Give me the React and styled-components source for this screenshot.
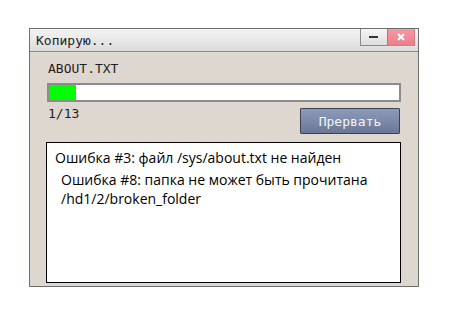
import React from "react";
import styled, { createGlobalStyle } from "styled-components";

const Global = createGlobalStyle`
  html, body { margin: 0; padding: 0; background: #ffffff; }
  body { font-family: "DejaVu Sans Mono", monospace; }
`;

const Page = styled.div`
  padding: 28px 0 0 29px;
`;

const Window = styled.div`
  width: 388px;
  height: 257px;
  border: 1px solid #6e6e6e;
  background: #ded7d0;
  display: flex;
  flex-direction: column;
`;

const TitleBar = styled.div`
  height: 22px;
  background: linear-gradient(#f4f4f4, #dcdcdc);
  border-bottom: 1px solid #8c8c8c;
  display: flex;
  align-items: flex-start;
  justify-content: space-between;
  padding-left: 6px;
`;

const Title = styled.div`
  font-family: "DejaVu Sans Mono", monospace;
  font-size: 13px;
  color: #1e1e1e;
  line-height: 23px;
`;

const Controls = styled.div`
  display: flex;
  margin-right: 3px;
`;

const CtrlButton = styled.div`
  width: 26px;
  height: 16px;
  display: flex;
  align-items: center;
  justify-content: center;
  border: 1px solid ${(p) => (p.$close ? "#d87882" : "#8a8a8a")};
  border-top: none;
  background: ${(p) =>
    p.$close ? "linear-gradient(#f39aa2, #ea7f89)" : "linear-gradient(#f6f6f6, #dedede)"};
  & + & { border-left: none; }
`;

const Content = styled.div`
  flex: 1;
  display: flex;
  flex-direction: column;
  padding: 9px 17px 12px 16px;
`;

const FileName = styled.div`
  font-size: 13px;
  line-height: 15px;
  color: #1e1e1e;
  padding-left: 2px;
`;

const Bar = styled.div`
  margin: 7px 0 0 1px;
  height: 15px;
  border: 2px solid #8b8b8b;
  background: #ffffff;
`;

const Fill = styled.div`
  height: 100%;
  background: #00ff00;
`;

const Row = styled.div`
  display: flex;
  justify-content: space-between;
  align-items: flex-start;
  margin-top: 4px;
  padding-left: 2px;
`;

const Count = styled.div`
  font-size: 13px;
  line-height: 15px;
  color: #1e1e1e;
`;

const AbortButton = styled.div`
  width: 98px;
  height: 24px;
  margin-top: 2px;
  margin-right: 1px;
  border: 1px solid #3c4150;
  border-radius: 1px;
  background: linear-gradient(#8d9bbb, #6a7794);
  color: #f2f4f8;
  font-size: 13px;
  display: flex;
  align-items: center;
  justify-content: center;
`;

const Log = styled.div`
  margin-top: 8px;
  height: 129px;
  border: 1px solid #000000;
  background: #ffffff;
  padding: 5px 8px;
  font-family: "Open Sans", sans-serif;
  font-size: 14px;
  color: #000000;
`;

const LogLine = styled.div`
  line-height: 19px;
  padding-left: ${(p) => p.$indent || 0}px;
  margin-bottom: 3px;
`;

export default function App() {
  const progress = 1 / 13;
  return (
    <Page>
      <Global />
      <Window>
        <TitleBar>
          <Title>Копирую...</Title>
          <Controls>
            <CtrlButton>
              <svg width="10" height="4" viewBox="0 0 10 4">
                <rect x="0" y="1" width="9" height="2" fill="#333" />
              </svg>
            </CtrlButton>
            <CtrlButton $close>
              <svg width="8" height="8" viewBox="0 0 8 8">
                <path d="M1 1L7 7M7 1L1 7" stroke="#fff" strokeWidth="2" />
              </svg>
            </CtrlButton>
          </Controls>
        </TitleBar>
        <Content>
          <FileName>ABOUT.TXT</FileName>
          <Bar>
            <Fill style={{ width: `${progress * 100}%` }} />
          </Bar>
          <Row>
            <Count>1/13</Count>
            <AbortButton>Прервать</AbortButton>
          </Row>
          <Log>
            <LogLine>Ошибка #3: файл /sys/about.txt не найден</LogLine>
            <LogLine $indent={6}>
              Ошибка #8: папка не может быть прочитана
              <br />
              /hd1/2/broken_folder
            </LogLine>
          </Log>
        </Content>
      </Window>
    </Page>
  );
}
